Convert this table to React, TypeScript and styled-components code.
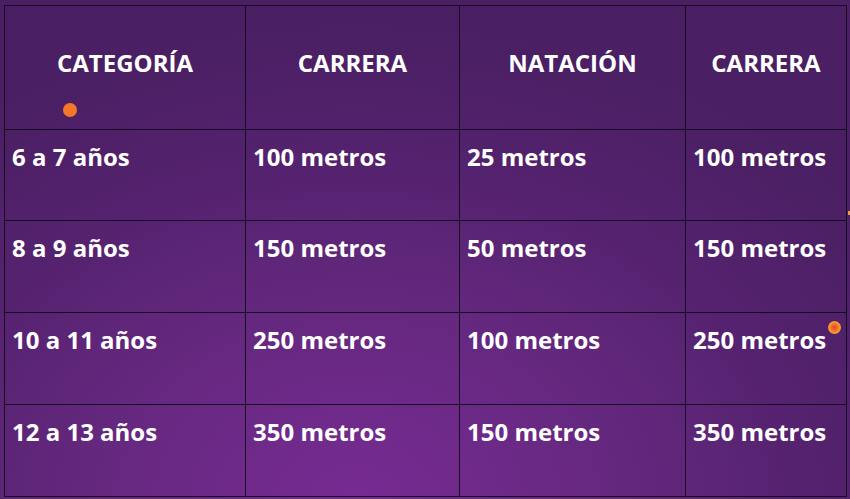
import React from 'react'
import styled, { createGlobalStyle } from 'styled-components'

const GlobalStyle = createGlobalStyle`
  html, body {
    margin: 0;
    padding: 0;
  }
  body {
    width: 850px;
    height: 499px;
    overflow: hidden;
    font-family: 'Open Sans', 'Liberation Sans', sans-serif;
  }
`

const Slide = styled.div`
  width: 850px;
  height: 499px;
  box-sizing: border-box;
  padding: 5px 0 0 4px;
  background: radial-gradient(ellipse 75% 95% at 42% 100%, #772b93 0%, #65287f 40%, #55226f 70%, #4a1f63 100%);
  position: relative;
`

const Table = styled.div`
  display: grid;
  grid-template-columns: 241px 214px 226px 161px;
  grid-template-rows: 124px 91px 92px 92px 92px;
  border-top: 1px solid #150a20;
  border-left: 1px solid #150a20;
  width: max-content;
`

const Cell = styled.div<{ $head?: boolean }>`
  position: relative;
  box-sizing: border-box;
  border-right: 1px solid #150a20;
  border-bottom: 1px solid #150a20;
  color: #ffffff;
  font-weight: 700;
  font-size: 24px;
  line-height: 1;
  display: flex;
  justify-content: ${(p) => (p.$head ? 'center' : 'flex-start')};
  padding: ${(p) => (p.$head ? '45px 0 0 0' : '15px 0 0 7px')};
  white-space: nowrap;
`

const Dot = styled.span<{ $x: number; $y: number; $size: number; $ring?: boolean }>`
  position: absolute;
  left: ${(p) => p.$x}px;
  top: ${(p) => p.$y}px;
  width: ${(p) => p.$size}px;
  height: ${(p) => p.$size}px;
  border-radius: 50%;
  background: ${(p) =>
    p.$ring ? 'radial-gradient(circle, #e5422f 0%, #ee6a2c 30%, #f59a2a 60%, #f3a23a 100%)' : '#f5782a'};
`

const EdgeMark = styled.span`
  position: absolute;
  right: 0;
  top: 211px;
  width: 2px;
  height: 4px;
  background: #f0a040;
`

const header = ['CATEGORÍA', 'CARRERA', 'NATACIÓN', 'CARRERA']

const rows = [
  ['6 a 7 años', '100 metros', '25 metros', '100 metros'],
  ['8 a 9 años', '150 metros', '50 metros', '150 metros'],
  ['10 a 11 años', '250 metros', '100 metros', '250 metros'],
  ['12 a 13 años', '350 metros', '150 metros', '350 metros'],
]

export default function App() {
  return (
    <>
      <GlobalStyle />
      <Slide>
        <Table>
          {header.map((h, i) => (
            <Cell key={'h' + i} $head>
              {h}
              {i === 0 && <Dot $x={58} $y={97} $size={14} />}
            </Cell>
          ))}
          {rows.map((row, r) =>
            row.map((c, i) => (
              <Cell key={r + '-' + i}>
                {c}
                {r === 2 && i === 3 && <Dot $x={142} $y={8} $size={13} $ring />}
              </Cell>
            ))
          )}
        </Table>
        <EdgeMark />
      </Slide>
    </>
  )
}
